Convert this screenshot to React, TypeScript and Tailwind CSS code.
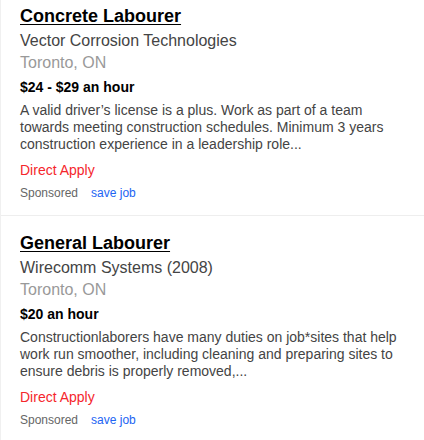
import React from 'react';

type Job = {
  title: string;
  company: string;
  location: string;
  salary: string;
  summary: string;
};

const jobs: Job[] = [
  {
    title: 'Concrete Labourer',
    company: 'Vector Corrosion Technologies',
    location: 'Toronto, ON',
    salary: '$24 - $29 an hour',
    summary:
      'A valid driver’s license is a plus. Work as part of a team towards meeting construction schedules. Minimum 3 years construction experience in a leadership role...',
  },
  {
    title: 'General Labourer',
    company: 'Wirecomm Systems (2008)',
    location: 'Toronto, ON',
    salary: '$20 an hour',
    summary:
      'Constructionlaborers have many duties on job*sites that help work run smoother, including cleaning and preparing sites to ensure debris is properly removed,...',
  },
];

const JobCard: React.FC<{ job: Job; first?: boolean }> = ({ job, first }) => (
  <div className={`border-b border-[#eeeeee] pl-[19px] pr-[20px] pb-[13px] ${first ? 'pt-[5px]' : 'pt-[16px]'}`}>
    <a href="#" className="block text-[18px] leading-[22px] font-bold text-black underline underline-offset-[2px]">
      {job.title}
    </a>
    <div className="mt-[3px] text-[16px] leading-[22px] text-[#444444]">{job.company}</div>
    <div className="text-[16px] leading-[22px] text-[#999999]">{job.location}</div>
    <div className="mt-[4px] text-[14px] leading-[18px] font-bold text-black">{job.salary}</div>
    <p className="mt-[6px] text-[14px] leading-[17px] text-[#444444]">{job.summary}</p>
    <div className="mt-[8px] text-[14px] leading-[18px] text-[#f5262c]">Direct Apply</div>
    <div className="mt-[6px] flex items-center gap-[13px] text-[12px] leading-[17px]">
      <span className="text-[#666666]">Sponsored</span>
      <a href="#" className="text-[#2164f3]">save job</a>
    </div>
  </div>
);

export default function App() {
  return (
    <div className="min-h-[440px] w-[424px] bg-white border-l border-[#f0f0f0]" style={{ fontFamily: '"Liberation Sans", Arial, sans-serif' }}>
      {jobs.map((job, i) => (
        <JobCard key={job.title} job={job} first={i === 0} />
      ))}
    </div>
  );
}
